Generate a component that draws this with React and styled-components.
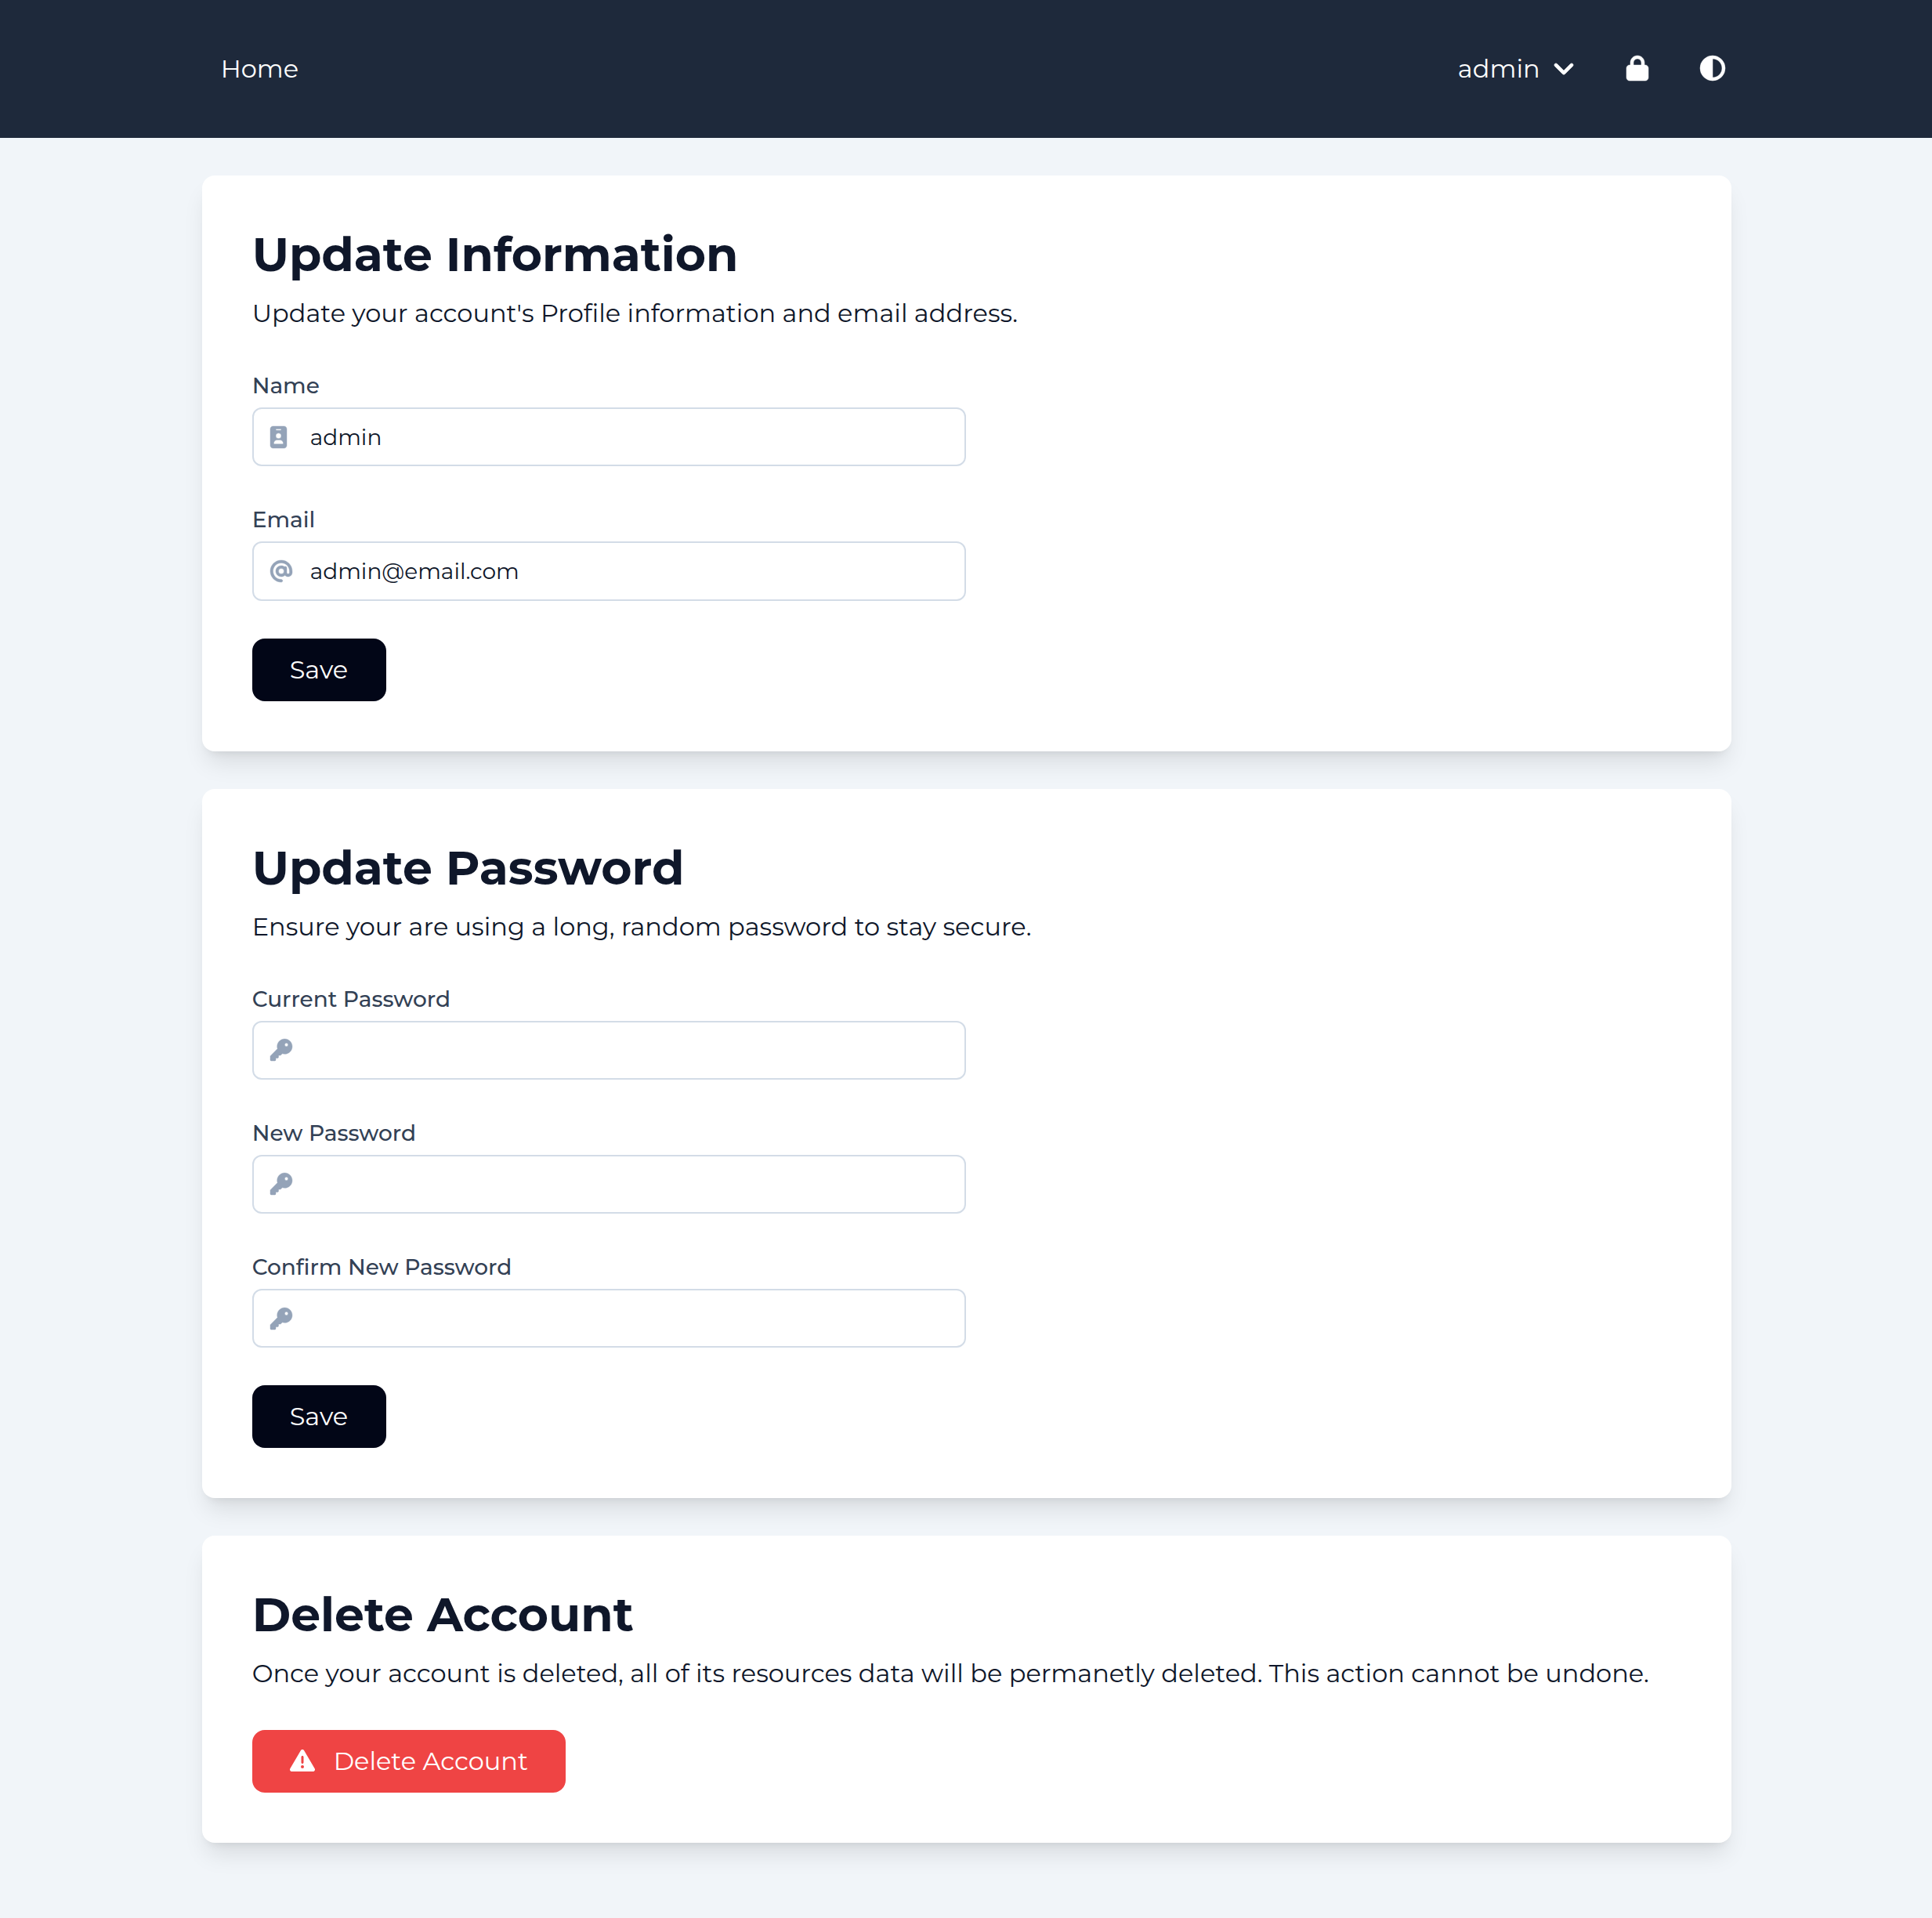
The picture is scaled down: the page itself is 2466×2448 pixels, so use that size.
import React from "react";
import styled, { createGlobalStyle } from "styled-components";
import {
  FaAt,
  FaCircleHalfStroke,
  FaIdBadge,
  FaKey,
  FaLock,
  FaTriangleExclamation,
} from "react-icons/fa6";

const GlobalStyle = createGlobalStyle`
  *, *::before, *::after {
    box-sizing: border-box;
  }
  body {
    margin: 0;
    background: #f1f5f9;
    color: #0f172a;
    font-family: Montserrat, Inter, "Open Sans", sans-serif;
    font-size: 32px;
    font-weight: 400;
    line-height: 48px;
  }
`;

const Page = styled.div`
  min-height: 2448px;
`;

const Header = styled.header`
  display: flex;
  justify-content: center;
  height: 176px;
  padding-left: 1.3px;
  background: #1e293b;
  color: #ffffff;
`;

const HeaderInner = styled.div`
  display: flex;
  align-items: center;
  justify-content: space-between;
  width: 1952px;
  padding: 0 8px 0 24px;
`;

const NavLink = styled.a`
  color: inherit;
  text-decoration: none;
`;

const NavActions = styled.nav`
  display: flex;
  align-items: center;
  gap: 66px;
`;

const PlainButton = styled.button`
  display: flex;
  align-items: center;
  padding: 0;
  border: 0;
  background: none;
  color: inherit;
  font: inherit;
`;

const UserMenu = styled(PlainButton)`
  gap: 18px;
  padding-right: 2px;
`;

const Chevron = styled.svg`
  width: 24px;
  height: 32px;
  margin-bottom: 2px;
  overflow: visible;
  fill: currentColor;
  stroke: currentColor;
  stroke-width: 12;
`;

const IconButton = styled(PlainButton)`
  svg {
    width: ${(p) => p.$width}px;
    height: 32px;
    margin-bottom: 2px;
    overflow: visible;
    stroke-width: 8;
  }
`;

const Main = styled.main`
  display: flex;
  flex-direction: column;
  gap: 48px;
  width: 1952px;
  margin-left: calc(50% - 975.35px);
  padding: 48px 0 96px;
`;

const Card = styled.section`
  padding: 64px;
  border-radius: 16px;
  background: #ffffff;
  box-shadow: 0 20px 30px -6px rgba(0, 0, 0, 0.1),
    0 8px 12px -8px rgba(0, 0, 0, 0.1);
`;

const Title = styled.h1`
  margin: 0 0 15px;
  padding-top: 1px;
  font-size: 60px;
  font-weight: 700;
  line-height: 72px;
`;

const Lead = styled.p`
  margin: 0 0 48px;
  white-space: nowrap;
`;

const Form = styled.form`
  display: flex;
  flex-direction: column;
  align-items: flex-start;
  gap: 48px;
`;

const FieldRoot = styled.label`
  display: flex;
  flex-direction: column;
  gap: 8px;
  width: 911.5px;
`;

const FieldLabel = styled.span`
  color: #334155;
  font-size: 28px;
  font-weight: 500;
  line-height: 40px;
`;

const InputBox = styled.span`
  display: flex;
  align-items: center;
  height: 75.25px;
  padding: 0 21.5px;
  border: 2px solid #d3dce7;
  border-radius: 12px;
`;

const InputIcon = styled.span`
  display: flex;
  flex: none;
  width: 50.5px;
  color: #94a3b8;

  svg {
    width: ${(p) => p.$width}px;
    height: 28px;
    overflow: visible;
    stroke-width: 8;
  }
`;

const Input = styled.input`
  flex: 1;
  min-width: 0;
  padding: 0;
  border: 0;
  outline: 0;
  background: none;
  color: #0f172a;
  font: inherit;
  font-size: 28px;
  line-height: 40px;
`;

const Button = styled.button`
  display: flex;
  align-items: center;
  gap: 24px;
  min-width: 171px;
  height: 80px;
  padding: 0 48px;
  border: 0;
  border-radius: 16px;
  background: ${(p) => (p.$danger ? "#ef4444" : "#020617")};
  color: #ffffff;
  font: inherit;
  white-space: nowrap;

  svg {
    width: 32px;
    height: 32px;
    margin-bottom: 2px;
  }
`;

function AngleDown() {
  return (
    <Chevron viewBox="0 0 384 512" aria-hidden="true">
      <path d="M192 384c-8.188 0-16.38-3.125-22.62-9.375l-160-160c-12.5-12.5-12.5-32.75 0-45.25s32.75-12.5 45.25 0L192 306.8l137.4-137.4c12.5-12.5 32.75-12.5 45.25 0s12.5 32.75 0 45.25l-160 160C208.4 380.9 200.2 384 192 384z" />
    </Chevron>
  );
}

function Field({ label, icon: Icon, iconWidth = 28, type = "text", value = "" }) {
  return (
    <FieldRoot>
      <FieldLabel>{label}</FieldLabel>
      <InputBox>
        <InputIcon $width={iconWidth}>
          <Icon />
        </InputIcon>
        <Input type={type} defaultValue={value} spellCheck={false} />
      </InputBox>
    </FieldRoot>
  );
}

export default function App() {
  return (
    <Page>
      <GlobalStyle />
      <Header>
        <HeaderInner>
          <NavLink href="#">Home</NavLink>
          <NavActions>
            <UserMenu type="button">
              admin
              <AngleDown />
            </UserMenu>
            <IconButton type="button" aria-label="Lock" $width={28}>
              <FaLock />
            </IconButton>
            <IconButton type="button" aria-label="Theme" $width={32}>
              <FaCircleHalfStroke />
            </IconButton>
          </NavActions>
        </HeaderInner>
      </Header>
      <Main>
        <Card>
          <Title>Update Information</Title>
          <Lead>Update your account's Profile information and email address.</Lead>
          <Form>
            <Field label="Name" icon={FaIdBadge} iconWidth={21} value="admin" />
            <Field label="Email" icon={FaAt} value="admin@email.com" />
            <Button type="button">Save</Button>
          </Form>
        </Card>
        <Card>
          <Title>Update Password</Title>
          <Lead>Ensure your are using a long, random password to stay secure.</Lead>
          <Form>
            <Field label="Current Password" icon={FaKey} type="password" />
            <Field label="New Password" icon={FaKey} type="password" />
            <Field label="Confirm New Password" icon={FaKey} type="password" />
            <Button type="button">Save</Button>
          </Form>
        </Card>
        <Card>
          <Title>Delete Account</Title>
          <Lead>
            Once your account is deleted, all of its resources data will be permanetly deleted. This
            action cannot be undone.
          </Lead>
          <Button type="button" $danger>
            <FaTriangleExclamation />
            Delete Account
          </Button>
        </Card>
      </Main>
    </Page>
  );
}
